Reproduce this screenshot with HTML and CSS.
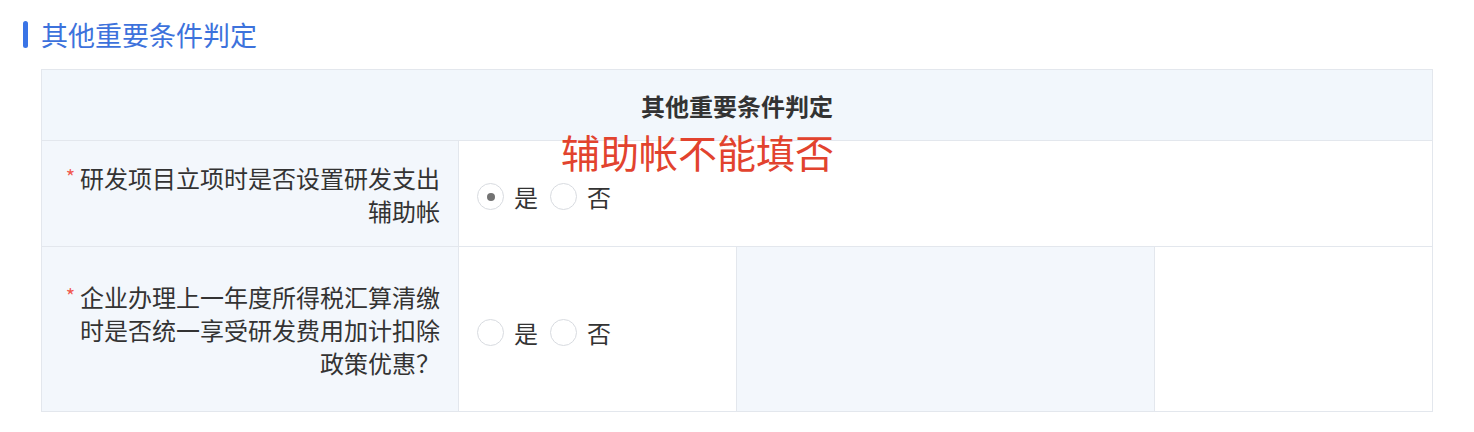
FILE: index.html
```html
<!DOCTYPE html>
<html>

<head>
  <title>其他重要条件判定</title>
  <link rel="stylesheet" href="styles.css">
</head>

<body class="main">
  <div class="section">
    <div class="section-title"><span class="bar"></span>其他重要条件判定</div>

    <div class="form-wrap">
      <table class="cond-table">
        <colgroup>
          <col class="c-label">
          <col class="c-value">
          <col class="c-label2">
          <col class="c-value">
        </colgroup>
        <tr class="row-head">
          <th colspan="4">其他重要条件判定</th>
        </tr>
        <tr class="row-one">
          <td class="label"><span class="req">*</span>研发项目立项时是否设置研发支出辅助帐</td>
          <td class="value" colspan="3">
            <div class="radios">
              <span class="radio checked"></span><span class="opt">是</span>
              <span class="radio"></span><span class="opt">否</span>
            </div>
          </td>
        </tr>
        <tr class="row-two">
          <td class="label"><span class="req">*</span>企业办理上一年度所得税汇算清缴时是否统一享受研发费用加计扣除政策优惠？</td>
          <td class="value">
            <div class="radios">
              <span class="radio"></span><span class="opt">是</span>
              <span class="radio"></span><span class="opt">否</span>
            </div>
          </td>
          <td class="label"></td>
          <td class="value"></td>
        </tr>
      </table>

      <div class="note">辅助帐不能填否</div>
    </div>
  </div>
</body>

</html>
```

FILE: styles.css
```css
.main {
  margin: 0;
  background: #fff;
  font-family: "Noto Sans CJK SC", "Noto Sans", sans-serif;
  color: #333;
}

.section {
  padding: 21px 0 0 23px;
}

.section-title {
  display: flex;
  align-items: center;
  height: 27px;
  font-size: 27px;
  color: #3d72dc;
}

.bar {
  width: 5px;
  height: 27px;
  border-radius: 3px;
  background: #3a74e6;
  margin-right: 13px;
}

.form-wrap {
  position: relative;
  margin: 21px 0 0 18px;
  width: 1392px;
}

.cond-table {
  width: 1392px;
  table-layout: fixed;
  border-collapse: collapse;
  font-size: 24px;
}

.c-label {
  width: 417px;
}

.c-label2 {
  width: 418px;
}

.c-value {
  width: 278px;
}

.cond-table th,
.cond-table td {
  border: 1px solid #e3e7ed;
  padding: 0;
}

.row-head th {
  height: 70px;
  background: #f2f7fc;
  font-weight: bold;
  color: #333;
  text-align: center;
}

.row-one td {
  height: 105px;
}

.row-two td {
  height: 164px;
}

.label {
  background: #f3f7fc;
  text-align: right;
  line-height: 33px;
  padding: 0 18px 0 20px !important;
}

.req {
  color: #f05a4f;
  font-size: 20px;
  margin-right: 5px;
  vertical-align: 3px;
}

.value {
  background: #fff;
}

.radios {
  display: flex;
  align-items: center;
  padding: 6px 0 0 18px;
}

.radio {
  box-sizing: border-box;
  width: 27px;
  height: 27px;
  border: 1px solid #d8dbe0;
  border-radius: 50%;
  display: flex;
  align-items: center;
  justify-content: center;
}

.radio.checked::after {
  content: "";
  width: 8px;
  height: 8px;
  border-radius: 50%;
  background: #737373;
}

.opt {
  margin: 0 12px 0 10px;
  color: #333;
}

.note {
  position: absolute;
  left: 520px;
  top: 63px;
  font-size: 39px;
  line-height: 39px;
  color: #e2432e;
}
```
